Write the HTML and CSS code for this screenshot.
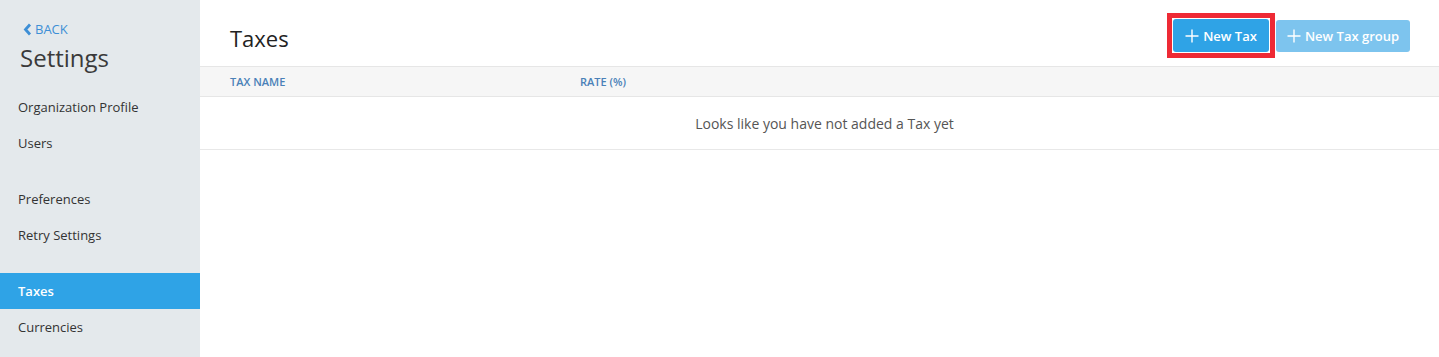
FILE: index.html
```html
<!DOCTYPE html>
<html>
<head>
<meta charset="utf-8">
<link rel="stylesheet" href="styles.css">
</head>
<body>
<div class="app">
  <aside class="sidebar">
    <a class="back" href="#"><svg class="chev" width="9" height="13" viewBox="0 0 9 13"><path d="M7 1.5 L2.5 6.5 L7 11.5" fill="none" stroke="#3d8fd6" stroke-width="2.8" stroke-linejoin="miter"/></svg><span>BACK</span></a>
    <h1 class="title">Settings</h1>
    <nav class="nav">
      <div class="group">
        <a class="item">Organization Profile</a>
        <a class="item">Users</a>
      </div>
      <div class="group">
        <a class="item">Preferences</a>
        <a class="item">Retry Settings</a>
      </div>
      <div class="group">
        <a class="item active">Taxes</a>
        <a class="item">Currencies</a>
      </div>
    </nav>
  </aside>
  <main class="main">
    <header class="head">
      <h2 class="page-title">Taxes</h2>
      <div class="actions">
        <div class="highlight">
          <button class="btn primary"><svg width="14" height="14" viewBox="0 0 14 14"><path d="M7 0.5 V13.5 M0.5 7 H13.5" stroke="#fff" stroke-width="1.4"/></svg><span>New Tax</span></button>
        </div>
        <button class="btn secondary"><svg width="14" height="14" viewBox="0 0 14 14"><path d="M7 0.5 V13.5 M0.5 7 H13.5" stroke="#fff" stroke-width="1.4"/></svg><span>New Tax group</span></button>
      </div>
    </header>
    <div class="thead">
      <div class="col name">TAX NAME</div>
      <div class="col rate">RATE (%)</div>
    </div>
    <div class="empty">Looks like you have not added a Tax yet</div>
  </main>
</div>
</body>
</html>
```

FILE: styles.css
```css
* { box-sizing: border-box; }
html, body { margin: 0; padding: 0; height: 100%; }
body {
  font-family: "Open Sans", "Liberation Sans", sans-serif;
  color: #333;
  background: #fff;
}
.app { display: flex; min-height: 357px; }
.sidebar {
  width: 200px;
  flex: 0 0 200px;
  background: #e4e9ec;
  padding-top: 21px;
}
.back {
  display: flex;
  align-items: center;
  gap: 3px;
  margin-left: 23px;
  color: #3d8fd6;
  font-size: 13px;
  line-height: 17px;
  text-decoration: none;
}
.chev { display: block; }
.title {
  margin: 4px 0 0 20px;
  font-size: 24px;
  font-weight: 400;
  line-height: 32px;
  color: #3a3a3a;
}
.nav { margin-top: 15px; display: flex; flex-direction: column; gap: 20px; }
.group { display: flex; flex-direction: column; }
.item {
  display: block;
  height: 36px;
  line-height: 36px;
  padding-left: 18px;
  font-size: 13px;
  color: #333;
}
.item.active {
  background: #2fa3e6;
  color: #fff;
  font-weight: 600;
}
.main { flex: 1; }
.head {
  height: 66px;
  display: flex;
  align-items: flex-start;
  justify-content: space-between;
  padding: 0 29px 0 30px;
}
.page-title {
  margin: 24px 0 0 0;
  font-size: 22px;
  font-weight: 400;
  line-height: 28px;
  color: #222;
}
.actions { display: flex; align-items: center; gap: 1px; padding-top: 13px; }
.highlight {
  border: 5px solid #ee2a35;
  padding: 1px;
  background: #fff;
}
.btn {
  display: flex;
  align-items: center;
  justify-content: center;
  gap: 4px;
  height: 33px;
  border: none;
  border-radius: 3px;
  color: #fff;
  font-family: inherit;
  font-size: 13px;
  font-weight: 600;
  padding: 0;
  white-space: nowrap;
}
.btn.primary { background: #2fa3e6; width: 96px; }
.btn.secondary { background: #7dc4ee; height: 32px; width: 134px; }
.thead {
  height: 31px;
  display: flex;
  align-items: center;
  background: #f6f6f6;
  border-top: 1px solid #e6e6e6;
  border-bottom: 1px solid #e6e6e6;
  font-size: 11px;
  font-weight: 600;
  color: #4a81b8;
}
.col.name { width: 380px; padding-left: 30px; }
.empty {
  height: 53px;
  display: flex;
  align-items: center;
  justify-content: center;
  padding-left: 10px;
  border-bottom: 1px solid #e8e8e8;
  font-size: 14px;
  color: #555;
}
```
